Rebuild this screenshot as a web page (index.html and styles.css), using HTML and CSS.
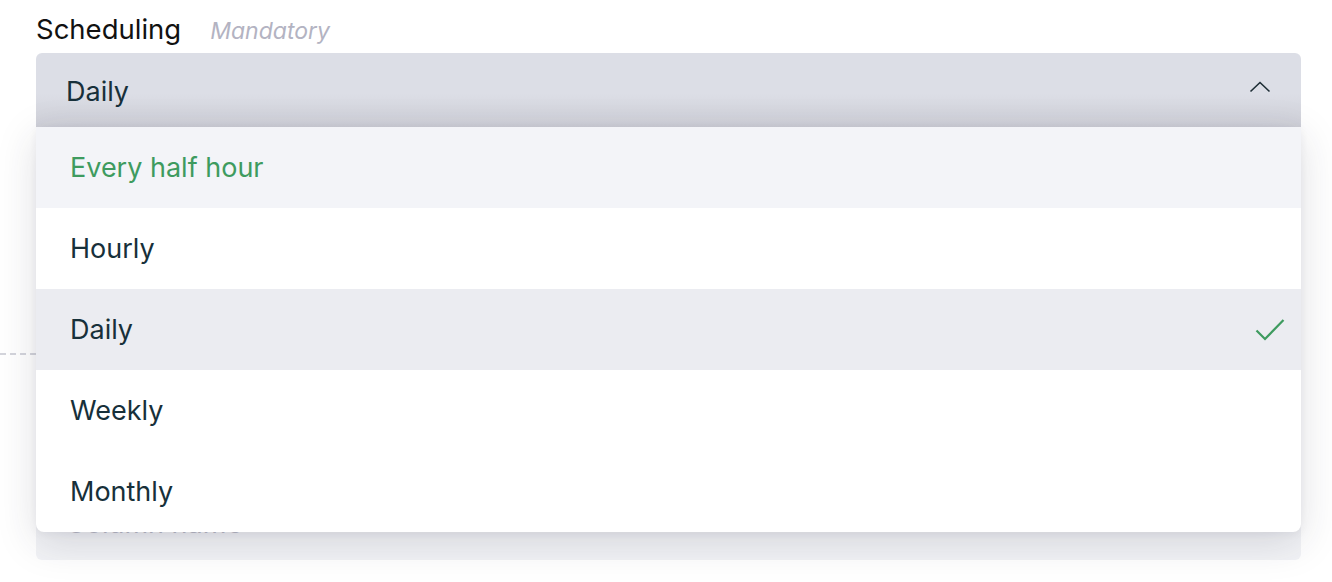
FILE: index.html
```html
<!DOCTYPE html>
<html lang="en">
<head>
<meta charset="utf-8">
<title>Scheduling</title>
<link rel="stylesheet" href="styles.css">
</head>
<body>
<div class="page">
  <div class="field">
    <div class="label-row">
      <span class="label">Scheduling</span>
      <span class="hint">Mandatory</span>
    </div>
    <div class="select-wrap">
      <div class="select">
        <span class="value">Daily</span>
        <svg class="chevron" width="22" height="12" viewBox="0 0 22 12"><path d="M1.5 10.5 L11 1.5 L20.5 10.5" fill="none" stroke="#1d2d35" stroke-width="1.6"/></svg>
      </div>
      <ul class="menu">
        <li class="option hover">Every half hour</li>
        <li class="option">Hourly</li>
        <li class="option selected">Daily
          <svg class="check" width="30" height="24" viewBox="0 0 30 24"><path d="M1.5 12.5 L10 21 L28.5 2" fill="none" stroke="#3e9b5f" stroke-width="2.2"/></svg>
        </li>
        <li class="option">Weekly</li>
        <li class="option">Monthly</li>
      </ul>
    </div>
  </div>
  <div class="divider"></div>
  <div class="field second">
    <div class="label-row">
      <span class="label">Column</span>
    </div>
    <div class="input">Column name</div>
  </div>
</div>
</body>
</html>
```

FILE: styles.css
```css
html, body {
  margin: 0;
  padding: 0;
  background: #ffffff;
}
body {
  font-family: Inter, "Open Sans", sans-serif;
  color: #17303a;
  min-height: 582px;
}
.page {
  padding: 13px 31px 0 36px;
  min-height: 582px;
  box-sizing: border-box;
}
.label-row {
  display: flex;
  align-items: baseline;
  gap: 29px;
  height: 40px;
}
.label {
  font-size: 27.5px;
  line-height: 32px;
  color: #111;
}
.hint {
  font-size: 23px;
  font-style: italic;
  color: #b3b3c2;
}
.select-wrap {
  position: relative;
}
.select {
  height: 74px;
  box-sizing: border-box;
  display: flex;
  align-items: center;
  justify-content: space-between;
  padding: 0 30px 0 30px;
  background: linear-gradient(#dcdee6 0%, #dcdee6 55%, #cfd0d8 100%);
  border-radius: 6px 6px 0 0;
  font-size: 27px;
}
.value {
  color: #17303a;
  margin-top: 2px;
}
.chevron {
  margin-top: -6px;
}
.menu {
  position: absolute;
  z-index: 5;
  top: 74px;
  left: 0;
  right: 0;
  margin: 0;
  padding: 0;
  list-style: none;
  background: #fff;
  border-radius: 0 0 8px 8px;
  overflow: hidden;
  box-shadow: 0 10px 40px rgba(40, 40, 60, 0.15), 0 2px 8px rgba(40, 40, 60, 0.06);
}
.option {
  height: 81px;
  display: flex;
  align-items: center;
  justify-content: space-between;
  padding: 0 16px 0 34px;
  font-size: 27px;
  color: #17303a;
}
.option.hover {
  background: #f3f4f8;
  color: #3e9b5f;
}
.option.selected {
  background: #ebecf1;
}
.divider {
  margin: 226px 0 0 -36px;
  height: 2px;
  background: repeating-linear-gradient(90deg, #d4d5dc 0 6px, transparent 6px 10px);
}
.second {
  margin-top: 91px;
}
.input {
  height: 74px;
  box-sizing: border-box;
  padding: 0 30px;
  display: flex;
  align-items: center;
  background: #f2f3f6;
  border-radius: 6px;
  font-size: 27px;
  color: #b9bac6;
}
```
